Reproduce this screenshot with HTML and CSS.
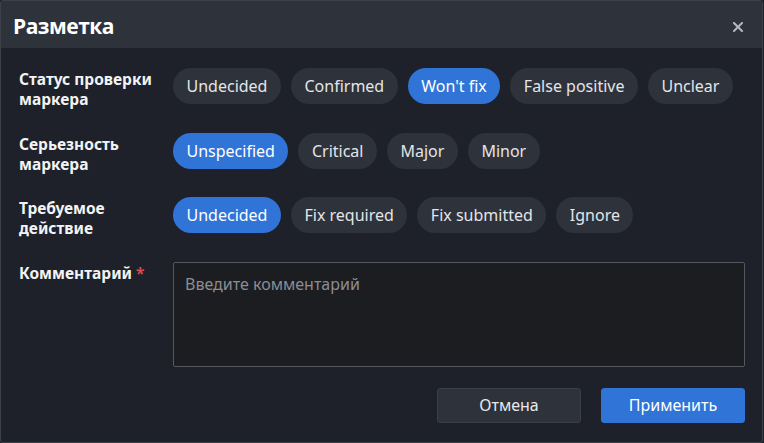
FILE: index.html
```html
<!DOCTYPE html>
<html lang="ru">
<head>
<meta charset="utf-8">
<link rel="stylesheet" href="styles.css">
</head>
<body>
<div class="dialog">
  <div class="header">
    <div class="title">Разметка</div>
    <button class="close" aria-label="Закрыть">
      <svg width="10" height="10" viewBox="0 0 10 10"><path d="M1 1L9 9M9 1L1 9" stroke="#b4b8c0" stroke-width="2" stroke-linecap="square"/></svg>
    </button>
  </div>
  <div class="body">
    <div class="row">
      <div class="label">Статус проверки маркера</div>
      <div class="pills">
        <span class="pill">Undecided</span>
        <span class="pill">Confirmed</span>
        <span class="pill active">Won't fix</span>
        <span class="pill">False positive</span>
        <span class="pill">Unclear</span>
      </div>
    </div>
    <div class="row">
      <div class="label">Серьезность маркера</div>
      <div class="pills">
        <span class="pill active">Unspecified</span>
        <span class="pill">Critical</span>
        <span class="pill">Major</span>
        <span class="pill">Minor</span>
      </div>
    </div>
    <div class="row">
      <div class="label">Требуемое действие</div>
      <div class="pills">
        <span class="pill active">Undecided</span>
        <span class="pill">Fix required</span>
        <span class="pill">Fix submitted</span>
        <span class="pill">Ignore</span>
      </div>
    </div>
    <div class="row comment-row">
      <div class="label">Комментарий <span class="req">*</span></div>
      <div class="textarea">Введите комментарий</div>
    </div>
    <div class="footer">
      <button class="btn btn-cancel">Отмена</button>
      <button class="btn btn-apply">Применить</button>
    </div>
  </div>
</div>
</body>
</html>
```

FILE: styles.css
```css
* { box-sizing: border-box; }
html, body { margin: 0; padding: 0; background: #1e2129; }
body { font-family: "Noto Sans", "Open Sans", sans-serif; color: #e3e5e9; }
.dialog {
  width: 763px;
  height: 443px;
  border: 1px solid #3c4048;
  border-radius: 3px;
  background: #1e2129;
  overflow: hidden;
  display: flex;
  flex-direction: column;
}
.header {
  height: 47px;
  background: #2e323a;
  display: flex;
  align-items: center;
  justify-content: space-between;
  padding: 0 19px 0 12px;
  flex-shrink: 0;
}
.title {
  font-family: "Open Sans", sans-serif;
  font-weight: 700;
  font-size: 21px;
  letter-spacing: -0.5px;
  color: #ffffff;
  padding-top: 2px;
}
.close {
  background: none;
  border: 0;
  padding: 0;
  display: flex;
  margin-top: 4px;
}
.body {
  padding: 20px 17px 0 18px;
  display: flex;
  flex-direction: column;
}
.row {
  display: flex;
  align-items: flex-start;
  margin-bottom: 23.67px;
}
.label {
  width: 154px;
  flex-shrink: 0;
  font-weight: 700;
  font-size: 15.5px;
  line-height: 20px;
  color: #f2f3f5;
  padding-top: 1px;
  padding-right: 10px;
}
.pills {
  display: flex;
  gap: 10px;
}
.pill {
  height: 36px;
  border-radius: 18px;
  background: #2e323a;
  color: #e3e5e9;
  font-size: 16px;
  line-height: 36px;
  padding: 0 13.5px;
  white-space: nowrap;
}
.pill.active {
  background: #2f74d6;
  color: #ffffff;
}
.comment-row { margin-bottom: 21px; }
.req { color: #e0484a; }
.textarea {
  width: 572px;
  height: 105px;
  border: 1px solid #55585e;
  border-radius: 2px;
  background: #1b1d21;
  color: #8a8d93;
  font-size: 16px;
  padding: 10px 11px;
}
.footer {
  display: flex;
  justify-content: flex-end;
  gap: 20px;
}
.btn {
  width: 144px;
  height: 35px;
  border-radius: 3px;
  font-family: "Noto Sans", "Open Sans", sans-serif;
  font-size: 16px;
  color: #e8eaee;
  border: 1px solid #3a3e46;
}
.btn-cancel { background: #2e323a; }
.btn-apply { background: #2f74d6; border-color: #2f74d6; color: #ffffff; }
```
